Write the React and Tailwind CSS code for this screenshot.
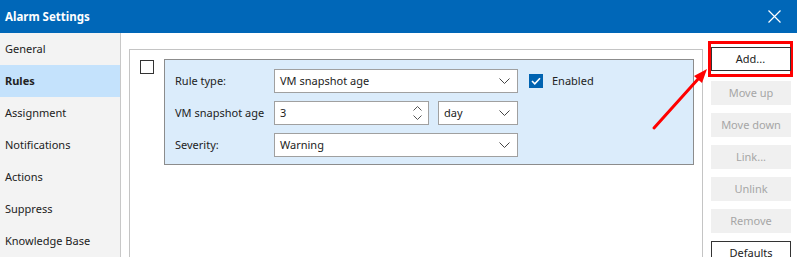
import React from 'react';

const navItems = ['General', 'Rules', 'Assignment', 'Notifications', 'Actions', 'Suppress', 'Knowledge Base'];

const Chevron = () => (
  <svg width="11" height="6" viewBox="0 0 11 6" className="shrink-0">
    <path d="M0.5 0.5 L5.5 5.5 L10.5 0.5" fill="none" stroke="#444" strokeWidth="1" />
  </svg>
);

const Select = ({ value, className }) => (
  <div className={`h-[24px] bg-white border border-[#a0a0a0] flex items-center justify-between pl-[5px] pr-[7px] ${className}`}>
    <span>{value}</span>
    <Chevron />
  </div>
);

const SideButton = ({ children, disabled }) => (
  <div
    className={`h-[24px] w-[80px] shrink-0 flex items-center justify-center ${
      disabled ? 'bg-[#f0f0f0] text-[#a6a6a6]' : 'bg-white border border-[#333] text-[#222]'
    }`}
  >
    {children}
  </div>
);

export default function App() {
  return (
    <div className="relative w-[797px] h-[257px] overflow-hidden bg-white text-[11px] text-[#222]" style={{ fontFamily: '"Noto Sans", "Open Sans", sans-serif' }}>
      {/* title bar */}
      <div className="h-[33px] bg-[#0067b8] flex items-center justify-between pl-[5px] pr-[16px]">
        <span className="text-white font-bold text-[11.5px]">Alarm Settings</span>
        <svg width="13" height="13" viewBox="0 0 13 13">
          <path d="M0.5 0.5 L12.5 12.5 M12.5 0.5 L0.5 12.5" stroke="#fff" strokeWidth="1.2" />
        </svg>
      </div>

      <div className="flex h-[224px]">
        {/* sidebar */}
        <div className="w-[121px] bg-[#f3f3f3] border-r border-[#c8c8c8] shrink-0">
          {navItems.map((item) => (
            <div
              key={item}
              className={`h-[32px] flex items-center pl-[5px] ${item === 'Rules' ? 'bg-[#c4e2fc] font-bold' : ''}`}
            >
              {item}
            </div>
          ))}
        </div>

        {/* main */}
        <div className="flex flex-1 pl-[8px] pt-[16px]">
          <div className="w-[574px] shrink-0 border-l border-t border-r border-[#c4c4c4] flex items-start pl-[10px] pt-[9px] gap-[10px]">
            <div className="w-[14px] h-[14px] border border-[#333] bg-white mt-[1px] shrink-0" />
            <div className="w-[530px] bg-[#dbecfb] border border-[#8c8c8c] pl-[10px] pt-[9px] pb-[7px] flex flex-col gap-[8px]">
              <div className="flex items-center">
                <span className="w-[99px]">Rule type:</span>
                <Select value="VM snapshot age" className="w-[244px]" />
                <div className="ml-[11px] flex items-center gap-[9px]">
                  <div className="w-[14px] h-[14px] bg-[#0063b1] flex items-center justify-center">
                    <svg width="10" height="8" viewBox="0 0 10 8">
                      <path d="M1 4 L3.8 6.8 L9 1.2" fill="none" stroke="#fff" strokeWidth="1.6" />
                    </svg>
                  </div>
                  <span>Enabled</span>
                </div>
              </div>
              <div className="flex items-center">
                <span className="w-[99px]">VM snapshot age</span>
                <div className="w-[155px] h-[24px] bg-white border border-[#a0a0a0] flex items-center justify-between pl-[5px] pr-[6px]">
                  <span>3</span>
                  <svg width="9" height="14" viewBox="0 0 9 14">
                    <path d="M0.5 4.5 L4.5 0.5 L8.5 4.5 M0.5 9.5 L4.5 13.5 L8.5 9.5" fill="none" stroke="#555" strokeWidth="1" />
                  </svg>
                </div>
                <Select value="day" className="w-[80px] ml-[9px]" />
              </div>
              <div className="flex items-center">
                <span className="w-[99px]">Severity:</span>
                <Select value="Warning" className="w-[244px]" />
              </div>
            </div>
          </div>

          {/* buttons */}
          <div className="flex flex-col gap-[8px] pl-[8px] -mt-[1px]">
            <div className="border-[3px] border-[#ff0000] w-[85px] h-[36px] shrink-0 -ml-[3px] -mt-[7px] -mb-[4px] flex items-center justify-center">
              <SideButton>Add...</SideButton>
            </div>
            <SideButton disabled>Move up</SideButton>
            <SideButton disabled>Move down</SideButton>
            <SideButton disabled>Link...</SideButton>
            <SideButton disabled>Unlink</SideButton>
            <SideButton disabled>Remove</SideButton>
            <SideButton>Defaults</SideButton>
          </div>
        </div>
      </div>

      {/* annotation arrow */}
      <svg className="absolute left-0 top-0 pointer-events-none" width="797" height="257">
        <line x1="654" y1="128" x2="699" y2="78" stroke="#ff0000" strokeWidth="3" strokeLinecap="round" />
        <polygon points="707,69 694,76 702,83" fill="#ff0000" />
      </svg>
    </div>
  );
}
